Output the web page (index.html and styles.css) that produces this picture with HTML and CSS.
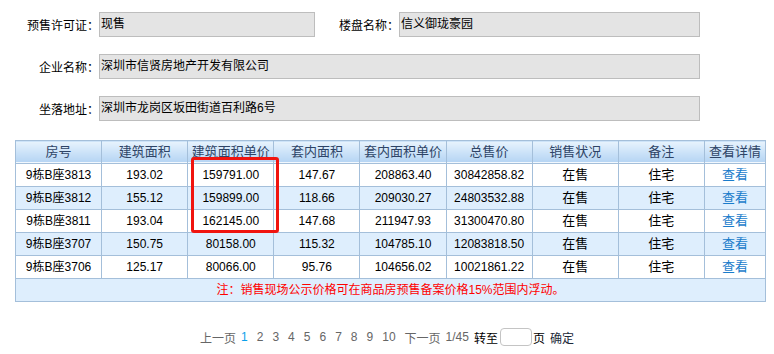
FILE: index.html
```html
<!DOCTYPE html>
<html lang="zh-CN">
<head>
    <meta charset="UTF-8">
    <title>楼盘信息</title>
    <link rel="stylesheet" href="styles.css">
</head>
<body>
    <div class="info-form">
        <div class="form-row">
            <label class="form-label">预售许可证：</label>
            <div class="form-value value-short">现售</div>
            <label class="form-label label-second">楼盘名称：</label>
            <div class="form-value value-mid">信义御珑豪园</div>
        </div>
        <div class="form-row">
            <label class="form-label">企业名称：</label>
            <div class="form-value value-long">深圳市信贤房地产开发有限公司</div>
        </div>
        <div class="form-row">
            <label class="form-label">坐落地址：</label>
            <div class="form-value value-long">深圳市龙岗区坂田街道百利路6号</div>
        </div>
    </div>

    <div class="table-wrap">
        <table class="house-table">
            <colgroup>
                <col class="col-std"><col class="col-std"><col class="col-std">
                <col class="col-std"><col class="col-std"><col class="col-std">
                <col class="col-std"><col class="col-std"><col class="col-last">
            </colgroup>
            <thead>
                <tr>
                    <th>房号</th>
                    <th>建筑面积</th>
                    <th>建筑面积单价</th>
                    <th>套内面积</th>
                    <th>套内面积单价</th>
                    <th>总售价</th>
                    <th>销售状况</th>
                    <th>备注</th>
                    <th>查看详情</th>
                </tr>
            </thead>
            <tbody>
                <tr>
                    <td>9栋B座3813</td><td>193.02</td><td>159791.00</td><td>147.67</td><td>208863.40</td><td>30842858.82</td>
                    <td class="cell-cn">在售</td><td class="cell-cn">住宅</td><td class="cell-cn"><a href="#" class="view-link">查看</a></td>
                </tr>
                <tr class="row-alt">
                    <td>9栋B座3812</td><td>155.12</td><td>159899.00</td><td>118.66</td><td>209030.27</td><td>24803532.88</td>
                    <td class="cell-cn">在售</td><td class="cell-cn">住宅</td><td class="cell-cn"><a href="#" class="view-link">查看</a></td>
                </tr>
                <tr>
                    <td>9栋B座3811</td><td>193.04</td><td>162145.00</td><td>147.68</td><td>211947.93</td><td>31300470.80</td>
                    <td class="cell-cn">在售</td><td class="cell-cn">住宅</td><td class="cell-cn"><a href="#" class="view-link">查看</a></td>
                </tr>
                <tr class="row-alt">
                    <td>9栋B座3707</td><td>150.75</td><td>80158.00</td><td>115.32</td><td>104785.10</td><td>12083818.50</td>
                    <td class="cell-cn">在售</td><td class="cell-cn">住宅</td><td class="cell-cn"><a href="#" class="view-link">查看</a></td>
                </tr>
                <tr>
                    <td>9栋B座3706</td><td>125.17</td><td>80066.00</td><td>95.76</td><td>104656.02</td><td>10021861.22</td>
                    <td class="cell-cn">在售</td><td class="cell-cn">住宅</td><td class="cell-cn"><a href="#" class="view-link">查看</a></td>
                </tr>
                <tr class="row-alt">
                    <td colspan="9" class="note-cell">注：销售现场公示价格可在商品房预售备案价格15%范围内浮动。</td>
                </tr>
            </tbody>
        </table>
        <div class="mark-box"></div>
    </div>

    <div class="pager">
        <a href="#" class="pager-text">上一页</a>
        <a href="#" class="page-num current">1</a>
        <a href="#" class="page-num">2</a>
        <a href="#" class="page-num">3</a>
        <a href="#" class="page-num">4</a>
        <a href="#" class="page-num">5</a>
        <a href="#" class="page-num">6</a>
        <a href="#" class="page-num">7</a>
        <a href="#" class="page-num">8</a>
        <a href="#" class="page-num">9</a>
        <a href="#" class="page-num">10</a>
        <a href="#" class="pager-text">下一页</a>
        <span class="page-count">1/45</span>
        <span class="jump">转至<input type="text" class="jump-input">页</span>
        <a href="#" class="confirm">确定</a>
    </div>
</body>
</html>
```

FILE: styles.css
```css
body {
    margin: 0;
    font-family: "Liberation Sans", "Noto Sans CJK SC", sans-serif;
    font-size: 12px;
    color: #000;
    background: #fff;
}

/* 顶部信息 */
.info-form {
    display: flex;
    flex-direction: column;
    gap: 17px;
    padding-top: 12px;
}

.form-row {
    display: flex;
    align-items: center;
}

.form-label {
    width: 99px;
    text-align: right;
    white-space: nowrap;
    color: #000;
}

.label-second {
    width: 84px;
}

.form-value {
    box-sizing: border-box;
    height: 25px;
    line-height: 23px;
    padding-left: 1px;
    background: #e4e4e4;
    border: 1px solid #bdbdbd;
}

.value-short {
    width: 216px;
}

.value-mid {
    width: 301px;
}

.value-long {
    width: 601px;
}

/* 房源表格 */
.table-wrap {
    position: relative;
    width: 751px;
    margin: 19px 0 0 15px;
}

.house-table {
    width: 751px;
    border-collapse: collapse;
    table-layout: fixed;
    border: 1px solid #a4bfda;
}

.col-std {
    width: 86px;
}

.col-last {
    width: 61px;
}

.house-table tr {
    height: 23px;
}

.house-table th,
.house-table td {
    border: 1px solid #a4bfda;
    padding: 0;
    line-height: 16px;
    text-align: center;
    white-space: nowrap;
}

.house-table th {
    font-size: 13px;
    font-weight: normal;
    color: #2e4466;
    background: linear-gradient(to bottom, #e8f3fd 0%, #c9e1f8 55%, #b3d3f3 100%);
    box-shadow: inset 0 -1px 0 #f2f8fe;
}

.house-table .cell-cn {
    font-size: 13px;
}

.row-alt td {
    background: #deeefd;
}

.view-link {
    color: #1a7ccb;
    text-decoration: none;
}

.note-cell {
    color: #f00;
    font-size: 12px;
}

/* 标注框 */
.mark-box {
    position: absolute;
    left: 176px;
    top: 17px;
    width: 88px;
    height: 76px;
    box-sizing: border-box;
    border: 3px solid #f0140f;
    border-radius: 3px;
}

/* 分页 */
.pager {
    display: flex;
    justify-content: center;
    align-items: center;
    margin-top: 26px;
    color: #666;
}

.pager a {
    text-decoration: none;
    color: #666;
}

.pager-text {
    margin-right: 5px;
}

.page-num {
    margin-right: 9px;
}

.pager .current {
    color: #0aa0ea;
}

.page-count {
    margin-right: 5px;
}

.jump {
    display: flex;
    align-items: center;
    color: #000;
}

.jump-input {
    box-sizing: border-box;
    width: 32px;
    height: 18px;
    margin: 0 1px 0 2px;
    padding: 0;
    border: 1px solid #c4c4c4;
    border-radius: 4px;
}

.pager .confirm {
    margin-left: 5px;
    color: #1d2a3a;
}
```
